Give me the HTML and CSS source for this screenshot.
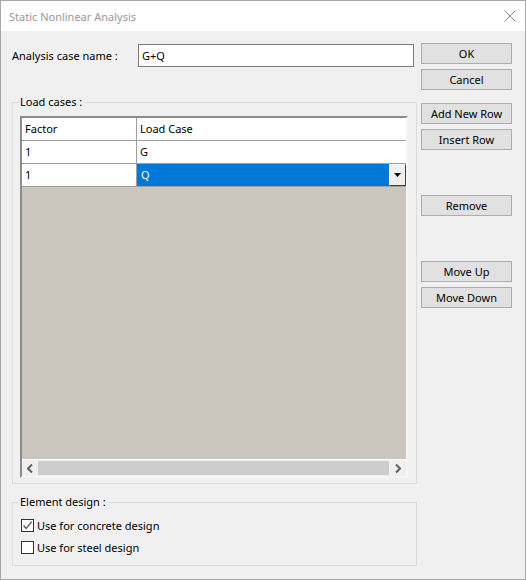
FILE: index.html
```html
<!DOCTYPE html>
<html lang="en">
<head>
    <meta charset="UTF-8">
    <title>Static Nonlinear Analysis</title>
    <link rel="stylesheet" href="styles.css">
</head>
<body>
<div class="window">
    <div class="titlebar">
        <span class="title">Static Nonlinear Analysis</span>
        <svg class="close" width="12" height="12" viewBox="0 0 12 12">
            <path d="M0.5 0.5 L11.5 11.5 M11.5 0.5 L0.5 11.5" stroke="#8a8a8a" stroke-width="1" fill="none"/>
        </svg>
    </div>

    <div class="content">
        <div class="main">
            <div class="name-row">
                <label class="name-label">Analysis case name :</label>
                <div class="textbox">G+Q</div>
            </div>

            <fieldset class="group load-group">
                <legend>Load cases :</legend>
                <div class="grid">
                    <div class="grid-body">
                        <div class="grid-row head">
                            <div class="cell">Factor</div>
                            <div class="cell">Load Case</div>
                        </div>
                        <div class="grid-row">
                            <div class="cell">1</div>
                            <div class="cell">G</div>
                        </div>
                        <div class="grid-row">
                            <div class="cell">1</div>
                            <div class="cell combo">
                                <span class="combo-value">Q</span>
                                <span class="combo-btn">
                                    <svg width="7" height="4" viewBox="0 0 7 4"><path d="M0 0 H7 L3.5 4 Z" fill="#000"/></svg>
                                </span>
                            </div>
                        </div>
                    </div>
                    <div class="hscroll">
                        <span class="arrow">
                            <svg width="6" height="9" viewBox="0 0 6 9"><path d="M5 0.5 L1 4.5 L5 8.5" stroke="#606060" stroke-width="2" fill="none"/></svg>
                        </span>
                        <span class="thumb"></span>
                        <span class="arrow">
                            <svg width="6" height="9" viewBox="0 0 6 9"><path d="M1 0.5 L5 4.5 L1 8.5" stroke="#606060" stroke-width="2" fill="none"/></svg>
                        </span>
                    </div>
                </div>
            </fieldset>

            <fieldset class="group design-group">
                <legend>Element design :</legend>
                <div class="check-row">
                    <span class="checkbox">
                        <svg width="11" height="11" viewBox="0 0 11 11"><path d="M1.5 5.5 L4.2 8.4 L9.8 1.6" stroke="#5c5c5c" stroke-width="1.4" fill="none"/></svg>
                    </span>
                    <span>Use for concrete design</span>
                </div>
                <div class="check-row">
                    <span class="checkbox"></span>
                    <span>Use for steel design</span>
                </div>
            </fieldset>
        </div>

        <div class="side">
            <button class="btn">OK</button>
            <button class="btn">Cancel</button>
            <button class="btn gap-s">Add New Row</button>
            <button class="btn">Insert Row</button>
            <button class="btn gap-l">Remove</button>
            <button class="btn gap-l">Move Up</button>
            <button class="btn">Move Down</button>
        </div>
    </div>
</div>
</body>
</html>
```

FILE: styles.css
```css
/* Estilo geral */
* {
    box-sizing: border-box;
}

body {
    margin: 0;
    font-family: "Noto Sans", "Open Sans", sans-serif;
    font-size: 11px;
    color: #000;
}

.window {
    width: 526px;
    height: 580px;
    border: 1px solid #a6a6a6;
    background: #f0f0f0;
    display: flex;
    flex-direction: column;
}

/* Barra de titulo */
.titlebar {
    height: 30px;
    background: #fff;
    display: flex;
    align-items: center;
    justify-content: space-between;
    padding: 0 9px 0 8px;
}

.title {
    color: #999;
}

.close {
    display: block;
}

.content {
    display: flex;
    gap: 4px;
    padding: 0 0 0 11px;
}

.main {
    width: 405px;
}

/* Nome do caso */
.name-row {
    display: flex;
    align-items: center;
    margin-top: 13px;
    height: 23px;
}

.name-label {
    width: 126px;
}

.textbox {
    width: 276px;
    height: 23px;
    background: #fff;
    border: 1px solid #7a7a7a;
    padding: 2px 0 0 3px;
    line-height: 17px;
}

/* Grupos */
.group {
    margin: 0;
    border: 1px solid #dcdcdc;
    padding: 0;
}

.group legend {
    margin-left: -1px;
    padding: 0 2px 0 1px;
    line-height: 16px;
}

.load-group {
    margin-top: 27px;
    padding: 6px 8px 5px 7px;
}

.design-group {
    margin-top: 10px;
    padding: 4px 7px 7px 7px;
}

/* Tabela */
.grid {
    width: 388px;
    height: 362px;
    background: #cbc7bf;
    border-style: solid;
    border-width: 2px;
    border-color: #8c8c8c #f5f5f5 #f5f5f5 #8c8c8c;
    display: flex;
    flex-direction: column;
}

.grid-body {
    flex: 1;
}

.grid-row {
    display: grid;
    grid-template-columns: 115px 1fr;
    height: 23px;
    background: #fff;
    border-bottom: 1px solid #a0a0a0;
}

.cell {
    padding-left: 3px;
    line-height: 22px;
}

.cell:first-child {
    border-right: 1px solid #a0a0a0;
}

.combo {
    display: flex;
    padding: 0;
}

.combo-value {
    flex: 1;
    background: #0078d7;
    color: #fff;
    padding-left: 4px;
}

.combo-btn {
    width: 17px;
    background: #f0f0f0;
    border-style: solid;
    border-width: 1px;
    border-color: #fff #404040 #404040 #fff;
    display: flex;
    align-items: center;
    justify-content: center;
}

/* Barra de rolagem */
.hscroll {
    height: 17px;
    display: flex;
    background: #f0f0f0;
    border-top: 1px solid #fff;
}

.arrow {
    width: 16px;
    display: flex;
    align-items: center;
    justify-content: center;
}

.thumb {
    flex: 1;
    background: #cdcdcd;
    margin: 1px 1px 1px 0;
}

/* Checkboxes */
.check-row {
    display: flex;
    align-items: center;
    gap: 3px;
    height: 22px;
    padding-left: 1px;
}

.checkbox {
    width: 13px;
    height: 13px;
    border: 1px solid #333;
    background: #fff;
    display: flex;
    align-items: center;
    justify-content: center;
}

/* Botoes */
.side {
    width: 91px;
    display: flex;
    flex-direction: column;
    gap: 5px;
    padding-top: 12px;
}

.btn {
    height: 21px;
    padding: 0;
    font-family: inherit;
    font-size: 11px;
    color: #000;
    background: #e1e1e1;
    border: 1px solid #adadad;
}

.gap-s {
    margin-top: 8px;
}

.gap-l {
    margin-top: 40px;
}
```
